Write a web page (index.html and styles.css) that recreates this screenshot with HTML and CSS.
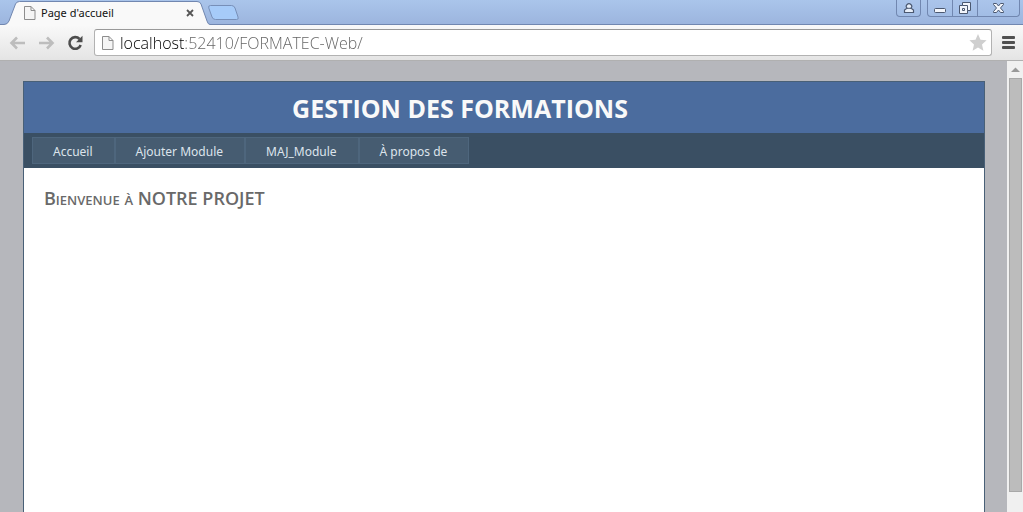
FILE: index.html
```html
<!DOCTYPE html>
<html lang="fr">
<head>
<meta charset="utf-8">
<title>Page d'accueil</title>
<link rel="stylesheet" href="styles.css">
</head>
<body>
<div class="browser">
  <header class="titlebar">
    <div class="tab">
      <svg class="tab-shape" viewBox="0 0 210 26" aria-hidden="true">
        <path d="M0 26V24.500H4Q7.500 24.500 9 21L15.500 4Q16.500 1.500 19.500 1.500H197Q200 1.500 201 4L207 21Q208 24.500 210 24.500V26Z" fill="#f9f9f9"/>
        <path d="M0 24.500H4Q7.500 24.500 9 21L15.500 4Q16.500 1.500 19.500 1.500H197Q200 1.500 201 4L207 21Q208 24.500 210 24.500" fill="none" stroke="#7187b0"/>
      </svg>
      <svg class="page-icon" viewBox="0 0 12 14" aria-hidden="true"><path d="M.5 .5H7L11 4.500V13.500H.5ZM7 .5V4.500H11" fill="#f5f5f5" stroke="#8d8d8d"/></svg>
      <span class="tab-title">Page d'accueil</span>
      <button class="tab-close" aria-label="Fermer l'onglet"><svg width="8" height="8" viewBox="0 0 8 8"><path d="M1 1L7 7M7 1L1 7" stroke="#555" stroke-width="1.800"/></svg></button>
    </div>
    <button class="new-tab" aria-label="Nouvel onglet"><svg width="34" height="17" viewBox="0 0 34 17"><path d="M2.500 1.500H23.500Q26 1.500 27 4L30 13Q31 15.500 28.500 15.500H7.500Q5 15.500 4 13L.8 4Q0 1.500 2.500 1.500Z" fill="#a6cbf9" stroke="#778fb8"/></svg></button>
    <div class="window-controls">
      <button class="user" aria-label="Utilisateur"><svg width="12" height="12" viewBox="0 0 12 12"><path d="M4 6.200A2.700 2.700 0 1 1 8 6.200L10.500 8V10.500H1.500V8Z" fill="#e8effa" stroke="#4b5870" stroke-width="1.200"/><path d="M4 6.300H8" stroke="#4b5870"/></svg></button>
      <div class="window-group">
        <button class="minimize" aria-label="Réduire"><svg width="14" height="12" viewBox="0 0 14 12"><rect x="1.500" y="6.500" width="11" height="4" rx="1" fill="#f3f6fc" stroke="#4b5870"/></svg></button>
        <button class="restore" aria-label="Restaurer"><svg width="14" height="14" viewBox="0 0 14 14"><path d="M4.500 1.500H12.500V9.500H9.500V12.500H1.500V4.500H4.500Z" fill="#f3f6fc" stroke="#4b5870"/><path d="M4.500 4.500H9.500V9.500M4.500 7.500H6.500V9.500H4.500Z" fill="none" stroke="#4b5870"/></svg></button>
        <button class="close" aria-label="Fermer"><svg width="13" height="12" viewBox="0 0 13 12"><path d="M1.500 1.500H4.500L6.500 4L8.500 1.500H11.500V2.500L8.500 6L11.500 9.500V10.500H8.500L6.500 8L4.500 10.500H1.500V9.500L4.500 6L1.500 2.500Z" fill="#f3f6fc" stroke="#4b5870"/></svg></button>
      </div>
    </div>
  </header>
  <div class="toolbar">
    <button class="tool" aria-label="Précédent"><svg width="17" height="14" viewBox="0 0 17 14"><path d="M8 1.500L2.500 7L8 12.500M3 7H16" fill="none" stroke="#bdbdbd" stroke-width="2.600"/></svg></button>
    <button class="tool" aria-label="Suivant"><svg width="17" height="14" viewBox="0 0 17 14"><path d="M9 1.500L14.500 7L9 12.500M14 7H1" fill="none" stroke="#bdbdbd" stroke-width="2.600"/></svg></button>
    <button class="tool" aria-label="Actualiser"><svg width="17" height="16" viewBox="0 0 17 16"><path d="M12.500 4A5.800 5.800 0 1 0 13.700 10" fill="none" stroke="#4d4d4d" stroke-width="2.600"/><path d="M15.500 .8V7.300H9Z" fill="#4d4d4d"/></svg></button>
    <div class="address">
      <svg class="page-icon" viewBox="0 0 12 14" aria-hidden="true"><path d="M.5 .5H7L11 4.500V13.500H.5ZM7 .5V4.500H11" fill="#f5f5f5" stroke="#8d8d8d"/></svg>
      <input class="url" type="text" aria-label="Adresse" value="localhost:52410/FORMATEC-Web/">
      <button class="star" aria-label="Ajouter aux favoris"><svg width="18" height="17" viewBox="0 0 18 17"><path d="M9 0L11.500 5.700L17.600 6.300L13 10.400L14.400 16.700L9 13.400L3.600 16.700L5 10.400L.4 6.300L6.500 5.700Z" fill="#cfcfcf"/></svg></button>
    </div>
    <button class="tool menu-button" aria-label="Menu"><svg width="13" height="13" viewBox="0 0 13 13"><path d="M1 1.500H12M1 6.500H12M1 11.500H12" stroke="#505050" stroke-width="2.800" stroke-linecap="round"/></svg></button>
  </div>
  <div class="viewport">
    <div class="canvas">
      <div class="page">
        <header class="page-header"><h1>GESTION DES FORMATIONS</h1></header>
        <nav class="menu">
          <a href="#accueil">Accueil</a>
          <a href="#ajouter">Ajouter Module</a>
          <a href="#maj">MAJ_Module</a>
          <a href="#apropos">À propos de</a>
        </nav>
        <main class="content"><h2>Bienvenue à NOTRE PROJET</h2></main>
      </div>
    </div>
    <div class="scrollbar" aria-hidden="true">
      <svg class="scroll-arrow" viewBox="0 0 13 17"><path d="M2 11L6.500 6.500L11 11Z" fill="#999"/></svg>
      <div class="scroll-thumb"></div>
    </div>
  </div>
</div>
</body>
</html>
```
FILE: styles.css
```css
* { box-sizing: border-box; }
body { margin: 0; font-family: "Open Sans", "Noto Sans", sans-serif; }
button { display: flex; align-items: center; justify-content: center; padding: 0; border: 0; background: none; }
svg { display: block; flex: none; }
.browser { display: flex; flex-direction: column; height: 100vh; overflow: hidden; }
.titlebar {
  display: flex;
  flex: none;
  height: 25px;
  background: linear-gradient(#aac5eb, #9cb5de);
  border-bottom: 1px solid #7187b0;
}
.tab { position: relative; display: flex; align-items: center; width: 208px; height: 26px; padding: 0 13px 0 24px; }
.tab-shape { position: absolute; left: 0; top: 0; width: 210px; height: 26px; }
.page-icon { position: relative; width: 12px; height: 14px; }
.tab-title { position: relative; flex: 1; margin-left: 5px; font-family: "Noto Sans", sans-serif; font-size: 11px; line-height: 16px; color: #111; }
.tab-close { position: relative; width: 10px; height: 12px; }
.new-tab { position: relative; width: 34px; height: 25px; }
.window-controls { display: flex; gap: 6px; margin-left: auto; padding-right: 3px; }
.window-controls button { height: 17px; border: 1px solid #7187b0; border-top: 0; background: linear-gradient(#abc5eb, #a2bde5); }
.user { width: 25px; }
.window-controls .user { border-radius: 0 0 4px 4px; }
.window-group { display: flex; }
.window-controls .minimize { width: 26px; border-radius: 0 0 0 4px; }
.window-controls .restore { width: 25px; border-left: 0; }
.window-controls .close { width: 42px; border-left: 0; border-radius: 0 0 4px; }
.toolbar {
  display: flex;
  flex: none;
  align-items: center;
  gap: 12px;
  height: 36px;
  padding: 0 6px 0 9px;
  background: linear-gradient(#f9f9f9, #e4e4e4);
  border-bottom: 1px solid #b0b0b0;
}
.tool { width: 17px; height: 24px; }
.address {
  display: flex;
  flex: 1;
  align-items: center;
  height: 27px;
  margin-left: -2px;
  padding: 0 4px 0 7px;
  background: #fff;
  border: 1px solid #b2b2b2;
  border-top-color: #999;
  border-radius: 3px;
}
.url {
  flex: 1;
  min-width: 0;
  height: 24px;
  margin-left: 6px;
  padding: 0;
  border: 0;
  outline: 0;
  background: linear-gradient(90deg, #000 64px, #606060 64px) text;
  color: #606060;
  -webkit-text-fill-color: transparent;
  font: 300 16px/24px "Open Sans", "Noto Sans", sans-serif;
}
.menu-button { margin-left: -4px; }
.viewport { display: flex; flex: 1; min-height: 0; }
.canvas { display: flex; flex: 1; padding: 20px 22px 0 23px; background: #b6b7bc; }
.page { flex: 1; background: #fff; border: 1px solid #496077; border-bottom: 0; }
.page-header { background: #4b6c9e; text-align: center; }
h1 { margin: 0; padding: 9px 88px 7px 0; font-size: 25px; line-height: 35px; font-weight: 700; color: #f9f9f9; }
.menu { display: flex; padding: 4px 8px; background: #3a4f63; }
.menu a {
  padding: 2px 21px 0 20px;
  border: 1px solid #4e667d;
  background: #465c71;
  color: #dde4ec;
  font-family: "Noto Sans", sans-serif;
  font-size: 12px;
  line-height: 23px;
  text-decoration: none;
}
.content { padding: 16px 20px; }
h2 { margin: 0; font-size: 18px; line-height: 28px; font-weight: 600; font-variant: small-caps; color: #696969; }
.scrollbar { flex: none; width: 16px; padding: 0 1px 0 2px; background: #f0f0f0; }
.scroll-arrow { width: 13px; height: 17px; }
.scroll-thumb { height: calc(100% - 37px); background: #bcbcbc; border: 1px solid #a8a8a8; }
```
